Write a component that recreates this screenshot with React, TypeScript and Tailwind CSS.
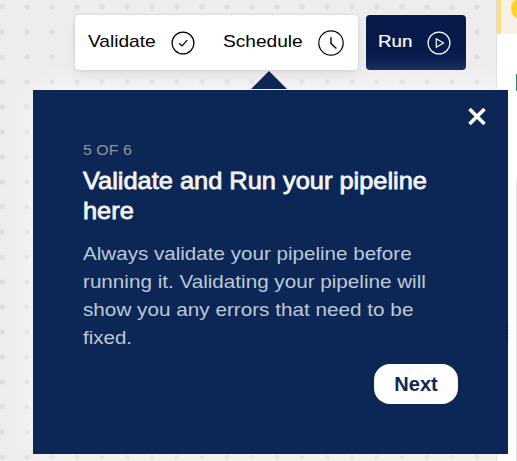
import type { ReactNode } from "react";

function CheckCircle() {
  return (
    <svg width="24" height="24" viewBox="0 0 24 24" fill="none" stroke="currentColor" strokeWidth="1.2">
      <circle cx="12" cy="12" r="10.9" />
      <path d="M8.2 12.3l2.8 2.7 5.3-5.8" />
    </svg>
  );
}

function Clock() {
  return (
    <svg width="26" height="26" viewBox="0 0 26 26" fill="none" stroke="currentColor" strokeWidth="1.2">
      <circle cx="13" cy="13" r="12.2" />
      <path d="M13 7.3v6.2l5.4 5" strokeWidth="1.4" />
    </svg>
  );
}

function PlayCircle() {
  return (
    <svg width="24" height="24" viewBox="0 0 24 24" fill="none" stroke="currentColor" strokeWidth="1.2">
      <circle cx="12" cy="12" r="10.9" />
      <path d="M9.3 7.8v8.4l7.2-4.2z" />
    </svg>
  );
}

function Line({ className, children }: { className: string; children: ReactNode }) {
  return <span className={`block origin-left whitespace-nowrap ${className}`}>{children}</span>;
}

function Toolbar() {
  return (
    <div className="flex gap-2 pl-[75px] pt-[15px] text-left text-[17px] leading-[24px] text-black">
      <div className="flex h-[55px] w-[283px] items-center rounded bg-white pl-[13px] shadow-[0_0_3px_rgba(0,0,0,0.15),0_6px_12px_rgba(0,0,0,0.06)]">
        <button className="flex w-[135px] items-center text-left">
          <Line className="w-[83px] scale-x-[1.125] pb-[2px]">Validate</Line>
          <CheckCircle />
        </button>
        <button className="flex items-center text-left">
          <Line className="w-[95px] scale-x-[1.125] pb-[2px]">Schedule</Line>
          <Clock />
        </button>
      </div>
      <button className="flex h-[55px] w-[100px] items-center rounded bg-linear-to-b from-[#071a49] from-60% to-[#10225a] pl-3 text-left text-white">
        <Line className="w-[49px] scale-x-[1.1] pb-[2px] [-webkit-text-stroke:0.2px_white]">Run</Line>
        <PlayCircle />
      </button>
    </div>
  );
}

function SidePanel() {
  return (
    <aside className="flex h-full w-[21px] shrink-0 flex-col border-l border-[#dedede] bg-white">
      <div className="relative h-[34px] overflow-hidden border-l-4 border-[#ffe07a] bg-[#f7f1e8]">
        <span className="absolute left-[10px] -top-[3px] size-[23px] rounded-full bg-[#ffd51f]" />
      </div>
      <div className="mt-10 h-[17px] w-px self-end bg-[#168454]" />
      <div className="mt-[89px] w-px flex-1 self-end bg-[#dedede]" />
    </aside>
  );
}

function TourPopup() {
  return (
    <section className="absolute left-[33px] top-[90px] h-[364px] w-[475px] bg-[#0c2755] pl-[50px] pr-[50px] pt-[50px] shadow-[0_0_28px_rgba(255,255,255,0.75)]">
      <svg className="absolute -top-[19px] left-[218px]" width="36" height="18" viewBox="0 0 36 18">
        <path d="M18 0l18 18H0z" fill="#0c2755" />
      </svg>
      <div className="absolute -top-px left-0 h-px w-full bg-[#f5f5f5]" />
      <button className="absolute left-[435px] top-[17px] text-white" aria-label="Close">
        <svg width="18" height="19" viewBox="0 0 18 19" stroke="currentColor" strokeWidth="3.6">
          <path d="M1.5 2l15 15M16.500 2l-15 15" />
        </svg>
      </button>
      <p className="text-[14px] leading-5 text-[#8f9499]">
        <Line className="scale-x-[1.14]">5 OF 6</Line>
      </p>
      <h2 className="mt-[6px] text-[24px] font-normal leading-[30px] text-[#f3f4f5] [-webkit-text-stroke:0.8px_#f3f4f5]">
        <Line className="scale-x-[1.058]">Validate and Run your pipeline</Line>
        <Line className="scale-x-[1.058]">here</Line>
      </h2>
      <div className="mt-[14px] text-[19px] leading-[28px] text-[#bdc9d7]">
        <Line className="scale-x-[1.084]">Always validate your pipeline before</Line>
        <Line className="scale-x-[1.087]">running it. Validating your pipeline will</Line>
        <Line className="scale-x-[1.09]">show you any errors that need to be</Line>
        <Line className="scale-x-[1.08]">fixed.</Line>
      </div>
      <div className="mt-[12px] flex justify-end">
        <button className="h-10 w-[84px] rounded-[16px] bg-white text-[20px] font-bold text-[#0c2755]">Next</button>
      </div>
    </section>
  );
}

export default function App() {
  return (
    <main className="relative flex h-[461px] w-[517px] overflow-hidden font-['Liberation_Sans',Arial,sans-serif]">
      <div className="h-full flex-1 bg-[#ededed] bg-[radial-gradient(circle_at_12.500px_12.500px,#dcdcdc_2.1px,transparent_2.8px)] bg-[length:25px_25px] bg-[position:-10.5px_-5.500px]">
        <Toolbar />
      </div>
      <SidePanel />
      <TourPopup />
      <div className="absolute left-[508px] top-[324px] h-[17px] w-px bg-[repeating-linear-gradient(to_bottom,#d0d0d0_0_1px,transparent_1px_3px)]" />
    </main>
  );
}
